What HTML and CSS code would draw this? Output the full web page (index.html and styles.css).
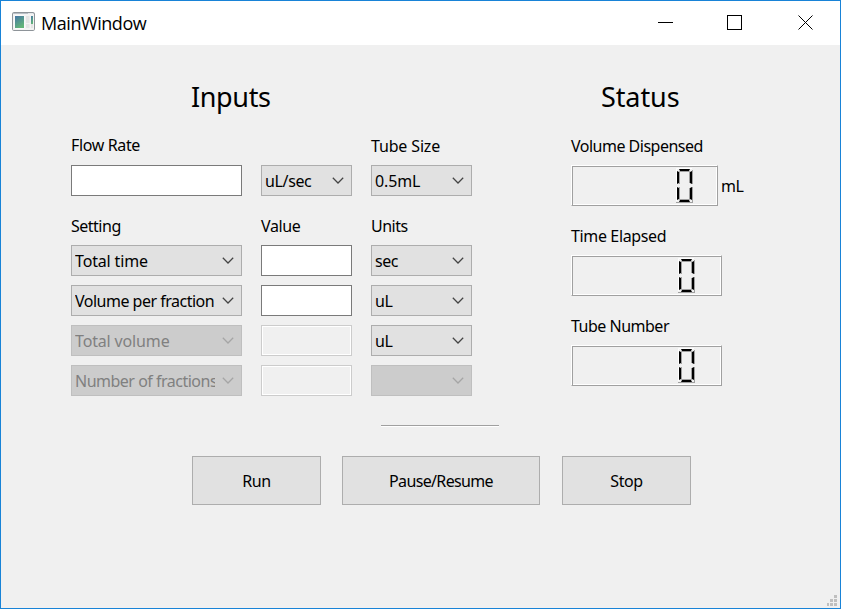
FILE: index.html
```html
<!DOCTYPE html>
<html lang="en">
<head>
<meta charset="utf-8">
<title>MainWindow</title>
<link rel="stylesheet" href="styles.css">
</head>
<body>
<svg width="0" height="0" class="defs">
  <symbol id="chevron" viewBox="0 0 12 7"><path d="M.8.8 6 6 11.2.8" fill="none" stroke="currentColor" stroke-width="1.25"/></symbol>
  <symbol id="zero" viewBox="0 0 17 36">
    <g fill="none" stroke="#fff"><path d="M.5 16V.5H16M.5 33V19"/></g>
    <g fill="none" stroke="#a0a0a0"><path d="M3.500 16V3.500H13.500V15M3.500 19V31.500H13.500V20M16.500 2V16M16.500 19V34M0 34.500H17"/></g>
    <g fill="#000"><path d="M3 1H14L13 3H4ZM1 3 3 4V15L1 16ZM16 3 14 4V15L16 16ZM1 19 3 20V31L1 32ZM16 19 14 20V31L16 32ZM4 32H13L14 34H3Z"/></g>
  </symbol>
</svg>
<div class="window">
  <header class="titlebar">
    <svg class="app-icon" width="23" height="19" viewBox="0 0 23 19">
      <defs><linearGradient id="g" x1="0" y1="0" x2=".5" y2="1"><stop offset="0" stop-color="#4676a6"/><stop offset="1" stop-color="#62b478"/></linearGradient></defs>
      <rect x=".5" y=".5" width="22" height="18" rx="1.200" fill="#f3f3f3" stroke="#8e9499"/>
      <path d="M1 1.500H22" stroke="#b9bfc6"/><path d="M16 1.500H21" stroke="#e5e8eb"/>
      <rect x="2.500" y="3.500" width="10" height="13" fill="#fff"/>
      <rect x="3" y="4" width="9" height="12" fill="url(#g)"/>
      <path d="M14 4H17.500V11H14ZM14 12H17.500V16H14ZM19 12H21V16H19Z" fill="#e4e4e4"/>
      <rect x="19" y="4" width="2" height="8" fill="url(#g)"/>
    </svg>
    <span class="title">MainWindow</span>
    <svg class="controls" width="156" height="16" viewBox="0 0 156 16" fill="none" stroke="#000">
      <path d="M0 8.500H15"/><rect x="69.500" y="1.500" width="14" height="14"/><path d="M140.500 1.500 154.500 15.500M154.500 1.500 140.500 15.500"/>
    </svg>
  </header>
  <main class="content">
    <div class="panels">
      <section class="inputs">
        <h1><span>Inputs</span></h1>
        <div class="grid">
          <label class="lbl mid"><span>Flow Rate</span></label><label class="lbl low wide"><span>Tube Size</span></label>
          <div class="field"></div>
          <div class="combo"><span>uL/sec</span><svg><use href="#chevron"/></svg></div>
          <div class="combo wide"><span>0.5mL</span><svg><use href="#chevron"/></svg></div>
          <label class="lbl low tight"><span>Setting</span></label><label class="lbl low"><span>Value</span></label><label class="lbl low tight"><span>Units</span></label>
          <div class="combo wide"><span>Total time</span><svg><use href="#chevron"/></svg></div>
          <div class="field"></div>
          <div class="combo tight"><span>sec</span><svg><use href="#chevron"/></svg></div>
          <div class="combo tight"><span>Volume per fraction</span><svg><use href="#chevron"/></svg></div>
          <div class="field"></div>
          <div class="combo"><span>uL</span><svg><use href="#chevron"/></svg></div>
          <div class="combo off wide"><span>Total volume</span><svg><use href="#chevron"/></svg></div>
          <div class="field off"></div>
          <div class="combo"><span>uL</span><svg><use href="#chevron"/></svg></div>
          <div class="combo off tight"><span>Number of fractions</span><svg><use href="#chevron"/></svg></div>
          <div class="field off"></div>
          <div class="combo off"><span></span><svg><use href="#chevron"/></svg></div>
        </div>
      </section>
      <section class="status">
        <h1><span>Status</span></h1>
        <label class="lbl tight"><span>Volume Dispensed</span></label>
        <div class="readout"><div class="lcd short"><svg role="img" aria-label="0"><use href="#zero"/></svg></div><span class="unit">mL</span></div>
        <label class="lbl"><span>Time Elapsed</span></label>
        <div class="readout"><div class="lcd"><svg role="img" aria-label="0"><use href="#zero"/></svg></div></div>
        <label class="lbl tight"><span>Tube Number</span></label>
        <div class="readout"><div class="lcd"><svg role="img" aria-label="0"><use href="#zero"/></svg></div></div>
      </section>
    </div>
    <hr class="rule">
    <div class="actions">
      <button class="btn run"><span>Run</span></button>
      <button class="btn pause"><span>Pause/Resume</span></button>
      <button class="btn stop"><span>Stop</span></button>
    </div>
  </main>
  <svg class="grip" width="10" height="11" viewBox="0 0 10 11" fill="#bfbfbf"><path d="M7 0h3v3H7zM3 4h3v3H3zM7 4h3v3H7zM0 8h2v3H0zM3 8h3v3H3zM7 8h3v3H7z"/></svg>
</div>
</body>
</html>
```
FILE: styles.css
```css
* { box-sizing: border-box; }
body { margin: 0; background: #f0f0f0; color: #000; font: 16px/20px "Noto Sans", sans-serif; letter-spacing: -.36px; }
.defs { position: absolute; }
.window { position: relative; width: 841px; height: 609px; border: 1px solid #1883d7; background: #f0f0f0; overflow: hidden; }
.titlebar { display: flex; align-items: center; height: 44px; padding: 0 26px 0 11px; background: #fff; }
.app-icon { margin-top: -3px; }
.title { margin-left: 6px; font: 18px/24px "Open Sans", sans-serif; letter-spacing: -.45px; }
.controls { margin-left: auto; margin-top: -2px; }
.content { padding: 33px 0 0 70px; }
.panels { display: flex; gap: 99px; }
.inputs { width: 401px; }
.status { width: 190px; }
h1 { margin: 0; padding-left: 120px; height: 38px; font-size: 27px; line-height: 38px; font-weight: 400; }
.status h1 { padding-left: 30px; letter-spacing: -.1px; }
.grid { display: grid; grid-template-columns: 171px 91px 101px; grid-auto-rows: 31px; gap: 9px 19px; padding-top: 9px; }
.lbl { display: block; white-space: nowrap; }
.mid { padding-top: 10px; }
.low { padding-top: 11px; }
.low.wide { grid-column: 3; }
.wide { letter-spacing: -.15px; }
.tight { letter-spacing: -.5px; }
.combo { display: flex; align-items: center; justify-content: space-between; height: 31px; padding: 0 7px 0 3px; border: 1px solid #adadad; background: #e1e1e1; color: #000; }
.combo span { flex: 1; min-width: 0; overflow: hidden; white-space: nowrap; }
.combo svg { flex: none; width: 12px; height: 7px; margin-left: 7px; color: #444; }
.combo.off { background: #ccc; border-color: #bfbfbf; color: #808080; }
.combo.off svg { color: #a5a5a5; }
.field { height: 31px; border: 1px solid #7a7a7a; background: #fff; }
.field.off { border-color: #ccc; background: #f0f0f0; box-shadow: inset 0 0 0 1px #fff; }
.status .lbl { height: 49px; padding-top: 20px; }
.readout { display: flex; align-items: center; height: 41px; }
.lcd { width: 151px; height: 41px; padding: 2px 26px 0 0; border: 1px solid; border-color: #fff #a0a0a0 #a0a0a0 #fff; box-shadow: inset 1px 1px #a0a0a0, inset -1px -1px #fff; display: flex; justify-content: flex-end; }
.lcd.short { width: 147px; padding-right: 24px; }
.lcd svg { width: 17px; height: 36px; }
.unit { margin-left: 3px; }
.rule { width: 118px; height: 2px; margin: 29px 0 29px 310px; border: 0; border-top: 1px solid #a0a0a0; border-bottom: 1px solid #fff; }
.actions { display: flex; gap: 21px; padding-left: 121px; }
.btn { height: 49px; padding: 0; border: 1px solid #adadad; background: #e1e1e1; color: #000; font: inherit; letter-spacing: -.45px; width: 129px; }
.btn.pause { width: 198px; letter-spacing: -.65px; }
.btn.stop { margin-left: 1px; }
.grip { position: absolute; right: 3px; bottom: 2px; }
```
